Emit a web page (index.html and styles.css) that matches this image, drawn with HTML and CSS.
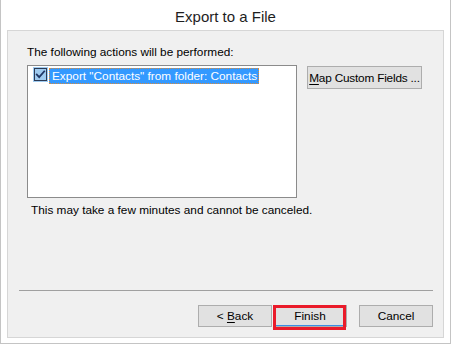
FILE: index.html
```html
<!DOCTYPE html>
<html>
<head>
<meta charset="utf-8">
<link rel="stylesheet" href="styles.css">
</head>
<body>
<div class="window">
  <div class="header">Export to a File</div>
  <div class="panel">
    <div class="label">The following actions will be performed:</div>
    <div class="row">
      <div class="listbox">
        <div class="item">
          <span class="check">
            <svg width="15" height="15" viewBox="0 0 15 15">
              <rect x="0" y="0" width="15" height="15" fill="#9fcbf0"/>
              <rect x="1.5" y="1.5" width="12" height="12" fill="none" stroke="#2b3a55" stroke-width="1"/>
              <path d="M3.8 7.6 L6.2 10.2 L11.2 4.4" fill="none" stroke="#1f3766" stroke-width="1.8" stroke-linecap="square"/>
            </svg>
          </span>
          <span class="sel">Export "Contacts" from folder: Contacts</span>
        </div>
      </div>
      <button class="btn map"><u>M</u>ap Custom Fields ...</button>
    </div>
    <div class="note">This may take a few minutes and cannot be canceled.</div>
    <div class="sep"></div>
    <div class="buttons">
      <button class="btn wide">&lt; <u>B</u>ack</button>
      <span class="finish-wrap">
        <button class="btn wide default">Finish</button>
        <span class="mark"></span>
      </span>
      <button class="btn wide cancel">Cancel</button>
    </div>
  </div>
</div>
</body>
</html>
```

FILE: styles.css
```css
html, body {
  margin: 0;
  padding: 0;
  background: #ffffff;
}
body {
  font-family: "Liberation Sans", Arial, sans-serif;
  font-size: 11.8px;
  color: #000;
}
.window {
  box-sizing: border-box;
  width: 451px;
  height: 344px;
  border: 1px solid #c4c4c4;
  border-top: none;
  background: #ffffff;
}
.header {
  height: 30px;
  box-sizing: border-box;
  padding-top: 6px;
  text-align: center;
  font-size: 15px;
  line-height: 22px;
  color: #1e1e1e;
}
.panel {
  box-sizing: border-box;
  margin-left: 6px;
  width: 437px;
  height: 308px;
  background: #f0f0f0;
  border: 1px solid #d6d6d6;
  padding: 13px 0 0 19px;
}
.label {
  line-height: 16px;
  height: 16px;
  white-space: nowrap;
}
.row {
  display: flex;
  align-items: flex-start;
  margin-top: 5px;
}
.listbox {
  box-sizing: border-box;
  width: 270px;
  height: 133px;
  background: #fff;
  border: 1px solid #8b8b8b;
}
.item {
  display: flex;
  align-items: flex-start;
  margin: 1px 0 0 5px;
}
.check {
  display: block;
  width: 15px;
  height: 15px;
}
.check svg {
  display: block;
}
.sel {
  box-sizing: border-box;
  margin: 1px 0 0 1px;
  height: 16px;
  width: 210px;
  background: #3399ff;
  color: #fff;
  border: 1px dotted #d98a3c;
  padding-left: 2px;
  line-height: 14px;
  white-space: nowrap;
}
.btn {
  box-sizing: border-box;
  font-family: inherit;
  font-size: 11.8px;
  color: #000;
  background: #e1e1e1;
  border: 1px solid #adadad;
  border-radius: 0;
  padding: 0;
  margin: 0;
  height: 22px;
  line-height: 18px;
  white-space: nowrap;
}
.btn u {
  text-decoration: underline;
  text-underline-offset: 2px;
}
.map {
  width: 115px;
  height: 23px;
  margin: 1px 0 0 10px;
  letter-spacing: -0.2px;
}
.note {
  margin: 4px 0 0 4px;
  line-height: 16px;
  height: 16px;
  white-space: nowrap;
}
.sep {
  margin: 72px 0 0 -8px;
  width: 414px;
  height: 1px;
  background: #a0a0a0;
}
.buttons {
  display: flex;
  justify-content: flex-end;
  margin: 14px 10px 0 0;
}
.wide {
  width: 74px;
}
.finish-wrap {
  position: relative;
  display: block;
  margin-left: 1px;
}
.default {
  display: block;
  border-color: #adadad;
  box-shadow: inset 0 -1px 0 #3a8ee6;
}
.mark {
  position: absolute;
  left: 0;
  top: 0;
  width: 73px;
  height: 25px;
  box-sizing: border-box;
  border: 3px solid #ea1b2a;
}
.cancel {
  margin-left: 12px;
}
```
